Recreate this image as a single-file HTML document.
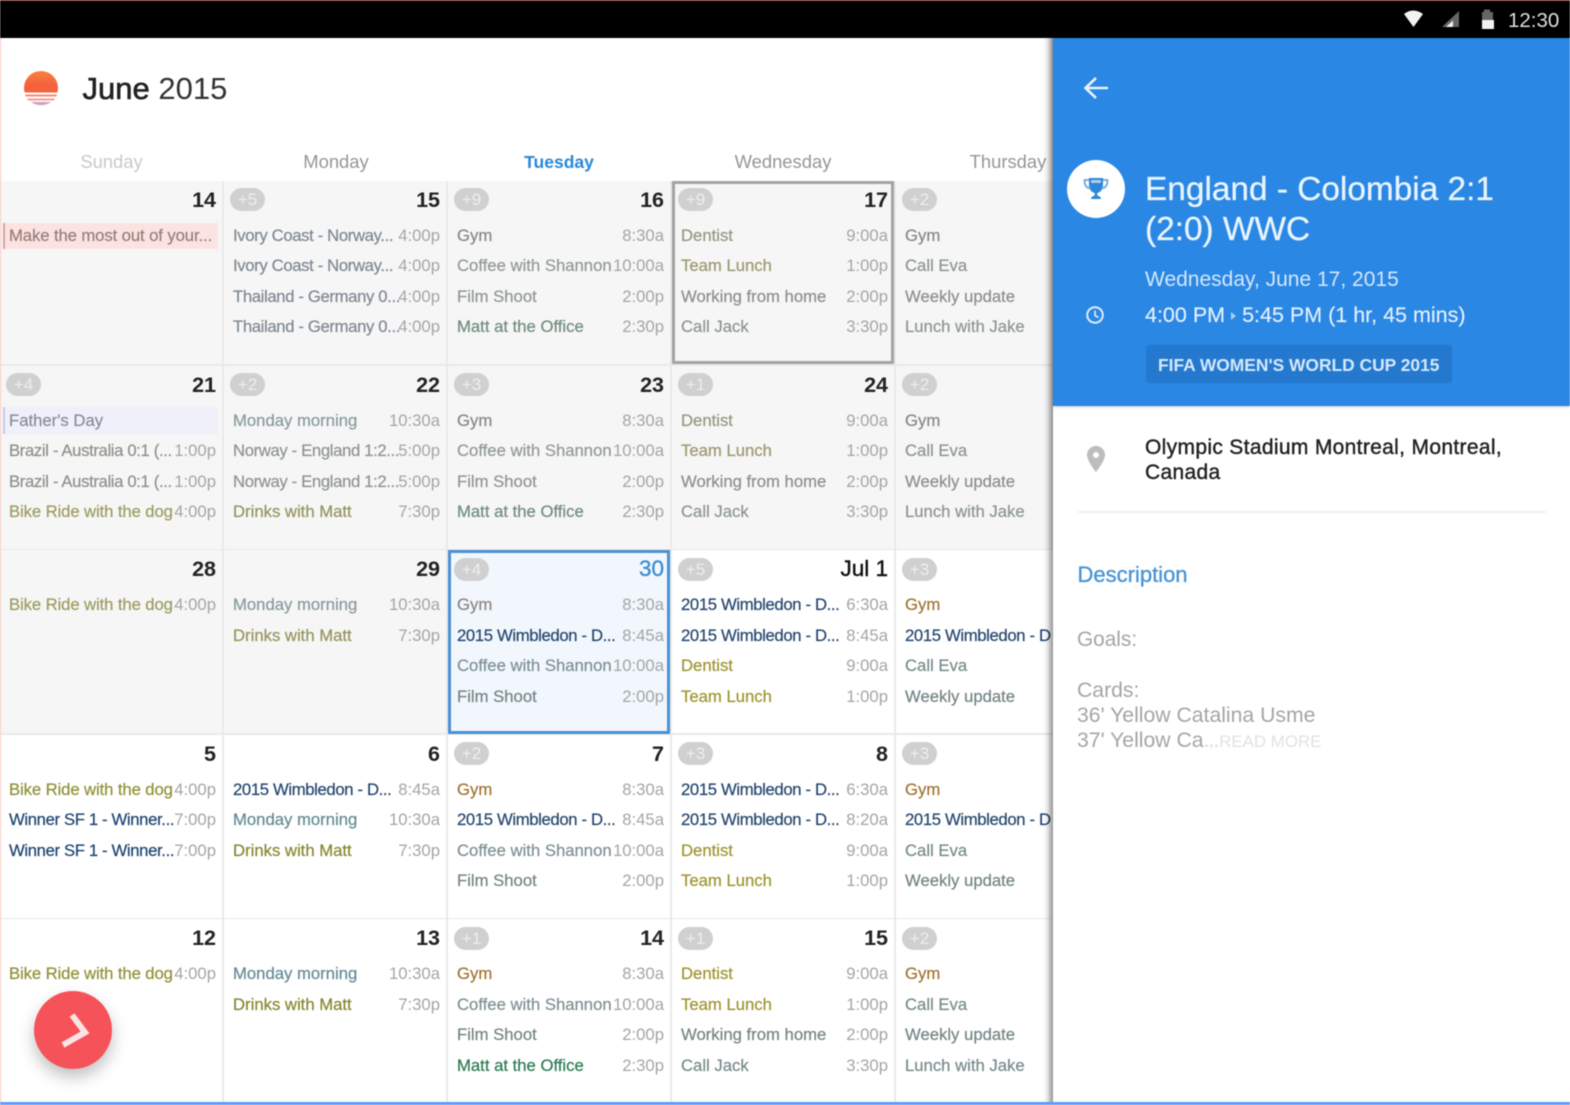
<!DOCTYPE html>
<html lang="en"><head><meta charset="utf-8"><title>June 2015</title>
<style>
*{box-sizing:border-box}
html,body{margin:0;padding:0;background:#fff}
body{width:1570px;height:1105px;overflow:hidden;position:relative;font-family:"Liberation Sans",sans-serif}
#w{position:absolute;left:0;top:0;width:1570px;height:1105px;overflow:hidden;filter:blur(.45px);background:#fff}
.a{position:absolute;white-space:nowrap}
#cal{position:absolute;left:0;top:0;width:1053px;height:1102px;overflow:hidden}
.d{position:absolute;top:151px;font-size:18.4px;line-height:22px;transform:translateX(-50%);color:#969696;white-space:nowrap}
.c{position:absolute;height:185px;width:224px;border-right:2px solid #e9e9e9;border-bottom:2px solid #e9e9e9;background:#fff}
.x{background:#f6f6f6}
.n{position:absolute;right:6px;top:6px;font-size:21.5px;line-height:26px;font-weight:bold;color:#222;white-space:nowrap}
.b{position:absolute;left:6px;top:7.500px;width:35px;height:23px;border-radius:12px;background:#d0d0d0;color:#eee;font-size:17px;line-height:23px;text-align:center}
.l{position:absolute;left:9px;right:6px;top:40px}
.e{position:relative;height:30.6px;line-height:30px;font-size:16.7px;white-space:nowrap;-webkit-text-stroke:.2px}
.e i{position:absolute;right:0;top:0;font-style:normal;color:#a5a5a5;letter-spacing:0;-webkit-text-stroke:0}
.t{letter-spacing:-.36px}
.t2{letter-spacing:-.2px}
.t3{letter-spacing:-.1px}
.g1{color:#8a8583}.g2{color:#a0742f}
.cf{color:#929898}.cf2{color:#7e9093}
.fi{color:#8f9595}.ma{color:#6f8c7c}.ma2{color:#2a7a52}
.de{color:#979680}.de2{color:#9e9430}
.tl{color:#9a9870}.tl2{color:#9e9430}
.wk{color:#8c8f8f}.ja{color:#8c9494}
.iv{color:#7f8892}.bk{color:#9c9c62}.bk2{color:#909038}
.mm{color:#8a9a9e}.mm2{color:#648a95}
.dr{color:#94945f}.dr2{color:#868630}
.wb{color:#24466e}.wn{color:#1b4470}.ev{color:#778a8a}.up{color:#758484}
.br{color:#8f918a}.no{color:#8f9494}
#panel{position:absolute;left:1053px;top:39px;width:517px;height:1063px;background:#fff}
</style></head><body><div id="w">
<div class="a" style="left:0;top:0;width:1570px;height:38px;background:#000;border-top:1px solid #7a3226"></div>
<svg class="a" style="left:1401px;top:8px" width="100" height="22" viewBox="0 0 100 22"><path d="M3 6Q12-1 22 6L12.500 19Z" fill="#f2f2f2"/><path d="M41 19L58 3V19Z" fill="#666"/><path d="M45 19L52 12.500V19Z" fill="#f0f0f0"/><path d="M81 4h2V1.500h6V4h3v17H81Z" fill="#666"/><rect x="81" y="12" width="12" height="9" fill="#f2f2f2"/></svg>
<div class="a" style="left:1508px;top:8px;font-size:20.5px;line-height:25px;color:#dedede">12:30</div>

<div id="cal">
<svg class="a" style="left:22px;top:69px" width="38" height="38" viewBox="0 0 38 38"><defs><linearGradient id="s" x1="0" y1="0" x2="0" y2="1"><stop offset="0" stop-color="#f9803f"/><stop offset=".65" stop-color="#f4623d"/></linearGradient></defs><path d="M2 19a17 17 0 0 1 34 0c0 2-.3 3-.8 4.500H2.800C2.300 22 2 21 2 19Z" fill="url(#s)"/><path d="M3 25.500h32l-.7 2H3.700Z" fill="#f58a73"/><path d="M5 29.500h28l-1.200 2H6.200Z" fill="#f39b92"/><path d="M9 33h20c-3 2-6 3-10 3s-7-1-10-3Z" fill="#c9a0c4"/></svg>
<div class="a" style="left:82.500px;top:70px;font-size:31px;line-height:38px;color:#222"><span style="-webkit-text-stroke:.6px #222">June</span> <span style="color:#333">2015</span></div>
<div class="d" style="left:111.500px;color:#c9c9c9">Sunday</div>
<div class="d" style="left:336px">Monday</div>
<div class="d" style="left:559px;color:#2a88d8;font-weight:bold;font-size:17.5px">Tuesday</div>
<div class="d" style="left:783px">Wednesday</div>
<div class="d" style="left:1008px">Thursday</div>

<!-- row 1 -->
<div class="c x" style="left:0;top:180.500px"><div class="n">14</div>
<div class="a" style="left:3px;top:42px;width:215px;height:26px;background:#fbe3e1;border-left:2px solid #d9a5a5"></div>
<div class="l"><div class="e t3" style="color:#9a7d7b">Make the most out of your...</div></div></div>
<div class="c x" style="left:224px;top:180.500px"><div class="b">+5</div><div class="n">15</div><div class="l"><div class="e iv t">Ivory Coast - Norway...<i>4:00p</i></div><div class="e iv t">Ivory Coast - Norway...<i>4:00p</i></div><div class="e iv t">Thailand - Germany 0...<i>4:00p</i></div><div class="e iv t">Thailand - Germany 0...<i>4:00p</i></div></div></div>
<div class="c x" style="left:448px;top:180.500px"><div class="b">+9</div><div class="n">16</div><div class="l"><div class="e g1">Gym<i>8:30a</i></div><div class="e cf">Coffee with Shannon<i>10:00a</i></div><div class="e fi">Film Shoot<i>2:00p</i></div><div class="e ma">Matt at the Office<i>2:30p</i></div></div></div>
<div class="c x" style="left:672px;top:180.500px"><div class="b">+9</div><div class="n">17</div><div class="l"><div class="e de">Dentist<i>9:00a</i></div><div class="e tl">Team Lunch<i>1:00p</i></div><div class="e wk">Working from home<i>2:00p</i></div><div class="e ja">Call Jack<i>3:30p</i></div></div></div>
<div class="c x" style="left:896px;top:180.500px"><div class="b">+2</div><div class="l"><div class="e g1">Gym</div><div class="e ja">Call Eva</div><div class="e wk">Weekly update</div><div class="e ja">Lunch with Jake</div></div></div>
<!-- row 2 -->
<div class="c x" style="left:0;top:365.500px"><div class="b">+4</div><div class="n">21</div>
<div class="a" style="left:3px;top:41px;width:215px;height:27px;background:#f0f0fb;border-left:2px solid #c9c9e8"></div>
<div class="l"><div class="e" style="color:#8a8a9c">Father's Day</div><div class="e br t">Brazil - Australia 0:1 (...<i>1:00p</i></div><div class="e br t">Brazil - Australia 0:1 (...<i>1:00p</i></div><div class="e bk t3">Bike Ride with the dog<i>4:00p</i></div></div></div>
<div class="c x" style="left:224px;top:365.500px"><div class="b">+2</div><div class="n">22</div><div class="l"><div class="e mm">Monday morning<i>10:30a</i></div><div class="e no t">Norway - England 1:2...<i>5:00p</i></div><div class="e no t">Norway - England 1:2...<i>5:00p</i></div><div class="e dr">Drinks with Matt<i>7:30p</i></div></div></div>
<div class="c x" style="left:448px;top:365.500px"><div class="b">+3</div><div class="n">23</div><div class="l"><div class="e g1">Gym<i>8:30a</i></div><div class="e cf">Coffee with Shannon<i>10:00a</i></div><div class="e fi">Film Shoot<i>2:00p</i></div><div class="e ma">Matt at the Office<i>2:30p</i></div></div></div>
<div class="c x" style="left:672px;top:365.500px"><div class="b">+1</div><div class="n">24</div><div class="l"><div class="e de">Dentist<i>9:00a</i></div><div class="e tl">Team Lunch<i>1:00p</i></div><div class="e wk">Working from home<i>2:00p</i></div><div class="e ja">Call Jack<i>3:30p</i></div></div></div>
<div class="c x" style="left:896px;top:365.500px"><div class="b">+2</div><div class="l"><div class="e g1">Gym</div><div class="e ja">Call Eva</div><div class="e wk">Weekly update</div><div class="e ja">Lunch with Jake</div></div></div>
<!-- row 3 -->
<div class="c x" style="left:0;top:550px"><div class="n">28</div><div class="l"><div class="e bk t3">Bike Ride with the dog<i>4:00p</i></div></div></div>
<div class="c x" style="left:224px;top:550px"><div class="n">29</div><div class="l"><div class="e mm">Monday morning<i>10:30a</i></div><div class="e dr">Drinks with Matt<i>7:30p</i></div></div></div>
<div class="c" style="left:448px;top:550px;background:#f1f7fd"><div class="b">+4</div><div class="n" style="color:#3d8fd0;font-weight:normal;font-size:22.5px;-webkit-text-stroke:.4px #3d8fd0">30</div><div class="l"><div class="e g1">Gym<i>8:30a</i></div><div class="e wb t">2015 Wimbledon - D...<i>8:45a</i></div><div class="e cf2">Coffee with Shannon<i>10:00a</i></div><div class="e up">Film Shoot<i>2:00p</i></div></div></div>
<div class="c" style="left:672px;top:550px"><div class="b">+5</div><div class="n" style="font-weight:normal;font-size:22.5px;color:#111;-webkit-text-stroke:.4px #111">Jul 1</div><div class="l"><div class="e wb t">2015 Wimbledon - D...<i>6:30a</i></div><div class="e wb t">2015 Wimbledon - D...<i>8:45a</i></div><div class="e de2">Dentist<i>9:00a</i></div><div class="e tl2">Team Lunch<i>1:00p</i></div></div></div>
<div class="c" style="left:896px;top:550px"><div class="b">+3</div><div class="l"><div class="e g2">Gym</div><div class="e wb t">2015 Wimbledon - D</div><div class="e ev">Call Eva</div><div class="e up">Weekly update</div></div></div>
<!-- row 4 -->
<div class="c" style="left:0;top:734.500px"><div class="n">5</div><div class="l"><div class="e bk2 t3">Bike Ride with the dog<i>4:00p</i></div><div class="e wn t">Winner SF 1 - Winner...<i>7:00p</i></div><div class="e wn t">Winner SF 1 - Winner...<i>7:00p</i></div></div></div>
<div class="c" style="left:224px;top:734.500px"><div class="n">6</div><div class="l"><div class="e wb t">2015 Wimbledon - D...<i>8:45a</i></div><div class="e mm2">Monday morning<i>10:30a</i></div><div class="e dr2">Drinks with Matt<i>7:30p</i></div></div></div>
<div class="c" style="left:448px;top:734.500px"><div class="b">+2</div><div class="n">7</div><div class="l"><div class="e g2">Gym<i>8:30a</i></div><div class="e wb t">2015 Wimbledon - D...<i>8:45a</i></div><div class="e cf2">Coffee with Shannon<i>10:00a</i></div><div class="e up">Film Shoot<i>2:00p</i></div></div></div>
<div class="c" style="left:672px;top:734.500px"><div class="b">+3</div><div class="n">8</div><div class="l"><div class="e wb t">2015 Wimbledon - D...<i>6:30a</i></div><div class="e wb t">2015 Wimbledon - D...<i>8:20a</i></div><div class="e de2">Dentist<i>9:00a</i></div><div class="e tl2">Team Lunch<i>1:00p</i></div></div></div>
<div class="c" style="left:896px;top:734.500px"><div class="b">+3</div><div class="l"><div class="e g2">Gym</div><div class="e wb t">2015 Wimbledon - D</div><div class="e ev">Call Eva</div><div class="e up">Weekly update</div></div></div>
<!-- row 5 -->
<div class="c" style="left:0;top:919px"><div class="n">12</div><div class="l"><div class="e bk2 t3">Bike Ride with the dog<i>4:00p</i></div></div></div>
<div class="c" style="left:224px;top:919px"><div class="n">13</div><div class="l"><div class="e mm2">Monday morning<i>10:30a</i></div><div class="e dr2">Drinks with Matt<i>7:30p</i></div></div></div>
<div class="c" style="left:448px;top:919px"><div class="b">+1</div><div class="n">14</div><div class="l"><div class="e g2">Gym<i>8:30a</i></div><div class="e cf2">Coffee with Shannon<i>10:00a</i></div><div class="e up">Film Shoot<i>2:00p</i></div><div class="e ma2">Matt at the Office<i>2:30p</i></div></div></div>
<div class="c" style="left:672px;top:919px"><div class="b">+1</div><div class="n">15</div><div class="l"><div class="e de2">Dentist<i>9:00a</i></div><div class="e tl2">Team Lunch<i>1:00p</i></div><div class="e up">Working from home<i>2:00p</i></div><div class="e ev">Call Jack<i>3:30p</i></div></div></div>
<div class="c" style="left:896px;top:919px"><div class="b">+2</div><div class="l"><div class="e g2">Gym</div><div class="e ev">Call Eva</div><div class="e up">Weekly update</div><div class="e ev">Lunch with Jake</div></div></div>
<!-- selection frames -->
<div class="a" style="left:672px;top:181px;width:222px;height:183px;border:3px solid #a3a3a3"></div>
<div class="a" style="left:448px;top:550px;width:222px;height:184px;border:3px solid #4a91d2"></div>
<!-- FAB -->
<div class="a" style="left:34px;top:991px;width:78px;height:78px;border-radius:50%;background:#f5525a;box-shadow:0 8px 16px rgba(0,0,0,.25)"></div>
<svg class="a" style="left:34px;top:991px" width="78" height="78" viewBox="0 0 78 78"><path d="M38 24L51 41.500L29 54" fill="none" stroke="#fbe3e3" stroke-width="6"/></svg>
<!-- panel shadow -->
<div class="a" style="left:1043px;top:38px;width:10px;height:1064px;background:linear-gradient(to right,rgba(0,0,0,0),rgba(0,0,0,.08) 40%,rgba(0,0,0,.42))"></div>
</div>

<div id="panel">
<div class="a" style="left:0;top:-1px;width:517px;height:368px;background:#2a87e4;box-shadow:0 1px 3px rgba(0,0,0,.2)"></div>
<svg class="a" style="left:28px;top:33px" width="32" height="32" viewBox="0 0 32 32"><path d="M27 16H5M15 6L4.500 16L15 26" fill="none" stroke="#e6f2fc" stroke-width="2.600"/></svg>
<div class="a" style="left:14px;top:120.500px;width:58px;height:58px;border-radius:50%;background:#fff"></div>
<svg class="a" style="left:29px;top:135.500px" width="28" height="28" viewBox="0 0 28 28"><path d="M7 3h14v7c0 5-3 8-7 8s-7-3-7-8Z" fill="#2d86d8"/><path d="M9 5h10v3H9Z" fill="#a8d0f2"/><path d="M7 5H2.500c0 5 2 8 6 8.500M21 5h4.500c0 5-2 8-6 8.500" fill="none" stroke="#6aa8e0" stroke-width="1.800"/><path d="M12.700 17h2.600v4h-2.600Z" fill="#2d86d8"/><path d="M9 24c0-2 2-3.500 5-3.500s5 1.500 5 3.500Z" fill="#2d86d8"/></svg>
<div class="a" style="left:92px;top:131px;font-size:33.4px;line-height:40px;color:#e8f4fd;-webkit-text-stroke:.3px #e8f4fd">England - Colombia 2:1<br>(2:0) WWC</div>
<div class="a" style="left:92px;top:228px;font-size:21px;line-height:26px;color:#d3e7fa">Wednesday, June 17, 2015</div>
<svg class="a" style="left:32px;top:265.500px" width="20" height="20" viewBox="0 0 20 20"><circle cx="10" cy="10" r="7.800" fill="none" stroke="#dcecfb" stroke-width="2"/><path d="M10 5.500V10.500L13.500 12.500" fill="none" stroke="#dcecfb" stroke-width="1.700"/></svg>
<div class="a" style="left:92px;top:263px;font-size:21.5px;line-height:26px;color:#e2f0fc;-webkit-text-stroke:.15px #e2f0fc">4:00 PM<span style="display:inline-block;width:0;height:0;margin:0 6px 2px 6px;border-left:5px solid #a8cff2;border-top:4px solid transparent;border-bottom:4px solid transparent"></span>5:45 PM (1 hr, 45 mins)</div>
<div class="a" style="left:93px;top:306px;width:306px;height:37.500px;background:#2479cf;border-radius:3px"></div>
<div class="a" style="left:105px;top:314px;font-size:17.4px;line-height:24px;font-weight:bold;color:#d4e8fa">FIFA WOMEN'S WORLD CUP 2015</div>
<svg class="a" style="left:32px;top:405px" width="22" height="30" viewBox="0 0 22 30"><path fill-rule="evenodd" d="M11 2a8.800 8.800 0 0 0-9 9c0 6 9 17 9 17s9-11 9-17a8.800 8.800 0 0 0-9-9Zm0 6a3 3 0 1 1 0 6a3 3 0 0 1 0-6Z" fill="#bdbdbd"/></svg>
<div class="a" style="left:92px;top:396px;font-size:21px;letter-spacing:.33px;line-height:25.300px;color:#222;-webkit-text-stroke:.4px #222">Olympic Stadium Montreal, Montreal,<br>Canada</div>
<div class="a" style="left:25px;top:472px;width:468px;height:2px;background:#efefef"></div>
<div class="a" style="left:24.500px;top:522.500px;font-size:22px;line-height:26px;color:#4a94d4;-webkit-text-stroke:.35px #4a94d4">Description</div>
<div class="a" style="left:24px;top:588px;font-size:20.8px;line-height:26px;color:#a5a5a5">Goals:</div>
<div class="a" style="left:24px;top:639px;font-size:21.2px;line-height:25.200px;color:#a5a5a5">Cards:<br>36' Yellow Catalina Usme<br>37' Yellow Ca<span style="color:#d8d8d8;margin-right:-5px;letter-spacing:-1px">...</span> <span style="font-size:16.9px;color:#e2e2e2">READ MORE</span></div>
</div>

<div class="a" style="left:0;top:1102px;width:1570px;height:3px;background:#5b9cf6"></div>
<div class="a" style="left:0;top:38px;width:1px;height:1064px;background:#f7c9c0"></div>
<div class="a" style="left:1568px;top:38px;width:2px;height:367px;background:#2a87e4"></div>
</div></body></html>
